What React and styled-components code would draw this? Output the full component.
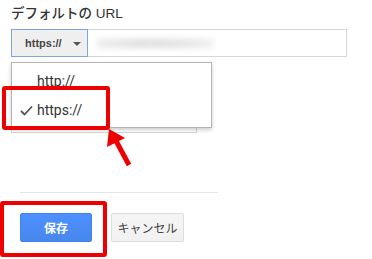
import React from 'react';
import styled, { createGlobalStyle } from 'styled-components';

const GlobalStyle = createGlobalStyle`
  body {
    margin: 0;
    background: #fff;
    font-family: Roboto, "Liberation Sans", "Noto Sans CJK JP", sans-serif;
  }
`;

const Page = styled.div`
  position: relative;
  width: 372px;
  height: 259px;
  padding: 6px 0 0 11px;
  box-sizing: border-box;
  overflow: hidden;
`;

const Title = styled.div`
  font-family: "Liberation Sans", "Noto Sans CJK JP", sans-serif;
  font-size: 13.5px;
  line-height: 16px;
  font-weight: 500;
  color: #333;
`;

const UrlRow = styled.div`
  position: relative;
  display: flex;
  margin-top: 7px;
  height: 28px;
`;

const SchemeButton = styled.div`
  display: flex;
  align-items: center;
  gap: 11px;
  width: 77px;
  box-sizing: border-box;
  padding-left: 13px;
  background: #efefef;
  border: 1px solid #7fa6dc;
  font-family: "Liberation Sans", sans-serif;
  font-size: 11px;
  font-weight: bold;
  color: #444;
`;

const Caret = styled.span`
  width: 0;
  height: 0;
  border-left: 4px solid transparent;
  border-right: 4px solid transparent;
  border-top: 4px solid #555;
  margin-top: 1px;
`;

const UrlInput = styled.div`
  display: flex;
  align-items: center;
  width: 259px;
  box-sizing: border-box;
  border: 1px solid #d6d6d6;
  border-left: none;
  padding-left: 8px;
`;

const Blurred = styled.div`
  width: 118px;
  height: 9px;
  border-radius: 5px;
  background: linear-gradient(90deg, #ececec, #dedede 40%, #e2e2e2 70%, #efefef);
  filter: blur(3px);
`;

const HiddenField = styled.div`
  margin-top: 48px;
  width: 186px;
  height: 28px;
  box-sizing: border-box;
  border: 1px solid #d6d6d6;
`;

const Menu = styled.div`
  position: absolute;
  top: 33px;
  left: 0;
  width: 201px;
  box-sizing: border-box;
  padding: 4px 0 2px;
  background: #fff;
  border: 1px solid #b5b5b5;
  box-shadow: 0 2px 4px rgba(0, 0, 0, 0.2);
  z-index: 2;
`;

const MenuItem = styled.div`
  position: relative;
  height: 29px;
  line-height: 29px;
  padding-left: 25px;
  font-size: 14px;
  color: #333;
`;

const Check = styled.svg`
  position: absolute;
  left: 8px;
  top: 9px;
`;

const Footer = styled.div`
  margin: 59px 0 0 9px;
  width: 198px;
  border-top: 1px solid #e5e5e5;
  padding-top: 20px;
  display: flex;
  gap: 19px;
`;

const Button = styled.div`
  width: ${(p) => p.w}px;
  height: 29px;
  box-sizing: border-box;
  border-radius: 2px;
  display: flex;
  align-items: center;
  justify-content: center;
  font-family: "Noto Sans CJK JP", sans-serif;
  font-size: 12px;
  font-weight: ${(p) => (p.primary ? 'bold' : 'normal')};
  color: ${(p) => (p.primary ? '#fff' : '#444')};
  background: ${(p) =>
    p.primary
      ? 'linear-gradient(#4d90fe, #4787ed)'
      : 'linear-gradient(#f5f5f5, #f1f1f1)'};
  border: 1px solid ${(p) => (p.primary ? '#3f83ee' : '#dcdcdc')};
`;

const Highlight = styled.div`
  position: absolute;
  left: ${(p) => p.x}px;
  top: ${(p) => p.y}px;
  width: ${(p) => p.w}px;
  height: ${(p) => p.h}px;
  box-sizing: border-box;
  border: 4px solid #ee0000;
  border-radius: 3px;
  z-index: 3;
`;

const Arrow = styled.svg`
  position: absolute;
  left: 100px;
  top: 124px;
  z-index: 3;
`;

export default function App() {
  return (
    <>
      <GlobalStyle />
      <Page>
        <Title>デフォルトの URL</Title>
        <UrlRow>
          <SchemeButton>
            https://
            <Caret />
          </SchemeButton>
          <UrlInput>
            <Blurred />
          </UrlInput>
          <Menu>
            <MenuItem>http://</MenuItem>
            <MenuItem>
              <Check width="13" height="11" viewBox="0 0 13 11">
                <path d="M1 6 L4.5 9.5 L12 1.5" fill="none" stroke="#555" strokeWidth="1.8" />
              </Check>
              https://
            </MenuItem>
          </Menu>
        </UrlRow>
        <HiddenField />
        <Footer>
          <Button primary w={72}>保存</Button>
          <Button w={73}>キャンセル</Button>
        </Footer>

        <Highlight x={2} y={86} w={108} h={44} />
        <Highlight x={0} y={201} w={107} h={56} />
        <Arrow width="36" height="46" viewBox="100 124 36 46">
          <line x1="129" y1="165" x2="115" y2="139" stroke="#ee0000" strokeWidth="5" />
          <polygon points="109,129 125,138 107,147" fill="#ee0000" />
        </Arrow>
      </Page>
    </>
  );
}
